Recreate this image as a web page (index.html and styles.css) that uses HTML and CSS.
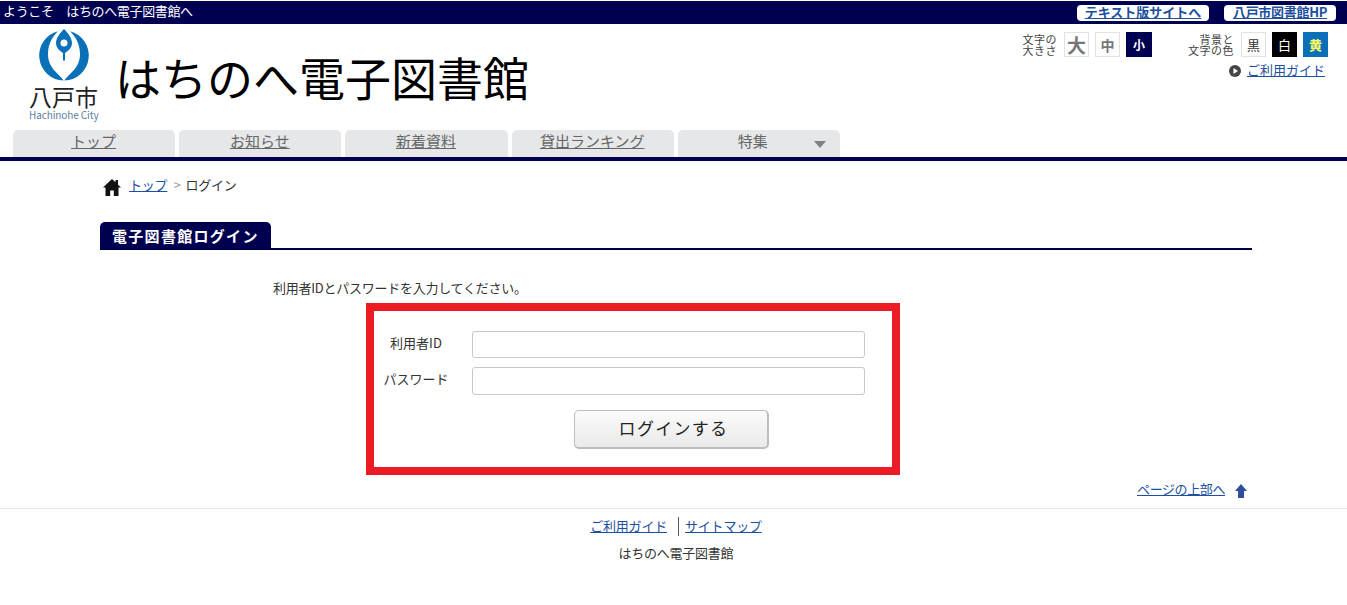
FILE: index.html
```html
<!DOCTYPE html>
<html lang="ja">
<head>
<meta charset="utf-8">
<title>はちのへ電子図書館</title>
<link rel="stylesheet" href="styles.css">
</head>
<body>
<div class="topbar">
  <span class="welcome">ようこそ　はちのへ電子図書館へ</span>
  <div class="toplinks">
    <a class="pill pill-a" href="#">テキスト版サイトへ</a>
    <a class="pill pill-b" href="#">八戸市図書館HP</a>
  </div>
</div>
<header class="header">
  <div class="logo">
    <svg class="mark" width="54" height="54" viewBox="0 0 54 54" aria-hidden="true">
      <path fill="#0a71b9" d="M20 3.300A25 25 0 0 0 25.500 52.500C22 46 10 41 10 26 10 16 15 8 20 3.300z"/>
      <path fill="#0a71b9" d="M32 3.300A25 25 0 0 1 26.500 52.500C30 46 42 41 42 26 42 16 37 8 32 3.300z"/>
      <path fill="#0a71b9" fill-rule="evenodd" d="M26 1c4 4 8 9 8 14 0 5-4 8-7 10v7.500h-2V25c-3-2-7-5-7-10 0-5 4-10 8-14zm0 10.500a3.500 3.500 0 1 0 0 7 3.500 3.500 0 0 0 0-7z"/>
    </svg>
    <span class="city">八戸市</span>
    <span class="city-en">Hachinohe City</span>
  </div>
  <div class="site-title">はちのへ電子図書館</div>
  <div class="tools">
    <div class="tool-row">
      <div class="tool-group">
        <span class="tool-label">文字の<br>大きさ</span>
        <span class="sq sq-lg">大</span>
        <span class="sq sq-md">中</span>
        <span class="sq sq-sm sq-navy">小</span>
      </div>
      <div class="tool-group">
        <span class="tool-label tool-label-r">背景と<br>文字の色</span>
        <span class="sq sq-plain">黒</span>
        <span class="sq sq-plain sq-black">白</span>
        <span class="sq sq-plain sq-blue">黄</span>
      </div>
    </div>
    <div class="guide">
      <svg width="12" height="12" viewBox="0 0 12 12" aria-hidden="true"><circle cx="6" cy="6" r="6" fill="#444"/><path d="M4.500 3v6L9 6z" fill="#fff"/></svg>
      <a href="#">ご利用ガイド</a>
    </div>
  </div>
</header>
<nav class="nav">
  <a class="tab" href="#">トップ</a>
  <a class="tab" href="#">お知らせ</a>
  <a class="tab" href="#">新着資料</a>
  <a class="tab" href="#">貸出ランキング</a>
  <span class="tab tab-drop">特集<i class="caret"></i></span>
</nav>
<main class="main">
  <div class="crumb">
    <svg width="18" height="17" viewBox="0 0 18 17" aria-hidden="true"><path fill="#111" d="M9 0 0 8.500h2.500V17h4.700v-5.500h3.600V17h4.700V8.500H18L15 5.700V1h-2.500v2.300z"/></svg>
    <a href="#">トップ</a><span class="sep">&gt;</span><span>ログイン</span>
  </div>
  <h1 class="heading"><span>電子図書館ログイン</span></h1>
  <p class="lead">利用者IDとパスワードを入力してください。</p>
  <form class="login" onsubmit="return false">
    <div class="field">
      <label class="field-label" for="uid">利用者ID</label>
      <input class="input" id="uid" type="text">
    </div>
    <div class="field field-2">
      <label class="field-label field-label-up" for="pw">パスワード</label>
      <input class="input input-tall" id="pw" type="password">
    </div>
    <button class="submit" type="submit">ログインする</button>
  </form>
  <div class="pagetop">
    <a href="#">ページの上部へ</a>
    <svg width="12" height="14" viewBox="0 0 12 14" aria-hidden="true"><path fill="#2f4e9c" d="M6 0 12 7H9v7H3V7H0z"/></svg>
  </div>
</main>
<footer class="footer">
  <div class="foot-links">
    <a href="#">ご利用ガイド</a><a class="foot-sep" href="#">サイトマップ</a>
  </div>
  <div class="foot-name">はちのへ電子図書館</div>
</footer>
</body>
</html>
```
FILE: styles.css
```css
* { box-sizing: border-box; }
html, body { margin: 0; padding: 0; }
body {
  background: #fff;
  color: #333;
  font-family: "Noto Sans CJK JP", "Noto Sans", sans-serif;
  font-size: 13px;
  overflow: hidden;
  height: 605px;
}
a { color: #1c4f9f; }

.topbar {
  margin-top: 1px;
  height: 23px;
  background: #000050;
  color: #fff;
  display: flex;
  justify-content: space-between;
  align-items: flex-start;
  padding-left: 3px;
  line-height: 20px;
}
.welcome { letter-spacing: -0.35px; }
.toplinks { display: flex; gap: 15px; padding-right: 11px; padding-top: 4px; }
.pill {
  height: 16px;
  background: #fff;
  border-radius: 4px;
  font-weight: 700;
  font-size: 13px;
  line-height: 13px;
  text-align: center;
  display: block;
  white-space: nowrap;
}
.pill-a { width: 132px; }
.pill-b { width: 112px; letter-spacing: -0.3px; }

.header {
  height: 106px;
  display: flex;
  align-items: flex-start;
}
.logo {
  width: 117px;
  padding-left: 29px;
  padding-top: 4px;
  display: flex;
  flex-direction: column;
  align-items: flex-start;
}
.mark { margin-left: 9px; }
.city {
  font-size: 23px;
  line-height: 23px;
  margin-top: 3px;
  color: #222;
}
.city-en {
  font-size: 10px;
  line-height: 12px;
  margin-top: 1px;
  color: #5b7f9f;
  white-space: nowrap;
  letter-spacing: -0.1px;
}
.site-title {
  font-size: 46px;
  line-height: 66px;
  margin-top: 19px;
  margin-left: -2px;
  color: #000;
  white-space: nowrap;
}
.tools {
  margin-left: auto;
  padding-right: 19px;
  padding-top: 8px;
  display: flex;
  flex-direction: column;
  align-items: flex-end;
}
.tool-row { display: flex; gap: 36px; }
.tool-group { display: flex; gap: 6px; align-items: center; }
.tool-label {
  font-size: 11px;
  letter-spacing: 0.5px;
  line-height: 11px;
  color: #444;
  text-align: left;
  margin-right: 1px;
}
.tool-label-r { text-align: right; }
.sq {
  width: 25px;
  height: 25px;
  border: 1px solid #e2e2e2;
  display: flex;
  align-items: center;
  justify-content: center;
  font-weight: 700;
  color: #777;
  line-height: 1;
}
.sq-lg { font-size: 19px; }
.sq-md { font-size: 14px; }
.sq-sm { font-size: 12px; }
.sq-navy { background: #000050; border-color: #000050; color: #fff; width: 26px; }
.sq-plain { font-size: 13px; font-weight: 400; color: #333; }
.sq-black { background: #000; border-color: #000; color: #fff; }
.sq-blue { background: #0a71b9; border-color: #0a71b9; color: #ffff66; font-weight: 700; }
.guide {
  margin-top: 3px;
  margin-right: 3px;
  display: flex;
  align-items: center;
  gap: 6px;
  line-height: 19px;
}
.guide svg { margin-top: 3px; }

.nav {
  height: 31px;
  padding-left: 13px;
  display: flex;
  gap: 4px;
  border-bottom: 4px solid #000050;
  background: #fff;
}
.tab {
  width: 162.200px;
  height: 27px;
  background: #e6e7e8;
  border-radius: 5px 5px 0 0;
  color: #666;
  font-size: 15px;
  line-height: 22px;
  text-align: center;
  display: block;
  position: relative;
  padding-right: 1px;
}
.tab-drop { padding-right: 12px; }
.caret {
  position: absolute;
  right: 14px;
  top: 11px;
  border-left: 6px solid transparent;
  border-right: 6px solid transparent;
  border-top: 7px solid #808080;
}

.main { padding: 0 95px 0 100px; }
.crumb {
  height: 61px;
  padding: 15px 0 0 3px;
  display: flex;
  align-items: flex-start;
  gap: 8px;
  line-height: 18px;
  letter-spacing: -0.2px;
}
.crumb svg { margin-top: 3px; }
.sep { color: #999; margin: 0 -3px 0 -2px; }
.heading {
  margin: 0;
  height: 28px;
  border-bottom: 2px solid #000050;
  display: flex;
}
.heading span {
  display: block;
  height: 26px;
  width: 171px;
  background: #000050;
  color: #fff;
  font-size: 15px;
  font-weight: 700;
  line-height: 28px;
  padding-left: 12px;
  border-radius: 5px 5px 0 0;
  white-space: nowrap;
  letter-spacing: 1.3px;
}
.lead {
  margin: 0;
  padding: 28px 0 0 173px;
  height: 53px;
  line-height: 19px;
  letter-spacing: -0.25px;
}
.login {
  margin-left: 266px;
  width: 534px;
  height: 172px;
  border: 8px solid #ed1c24;
  padding-top: 20px;
  display: flex;
  flex-direction: column;
}
.field { display: flex; align-items: center; height: 27px; }
.field-2 { margin-top: 9px; height: 28px; }
.field-label {
  width: 98px;
  text-align: center;
  padding-right: 14px;
  margin-top: -4px;
  line-height: 20px;
  white-space: nowrap;
}
.field-label-up { letter-spacing: 0; }
.input {
  width: 393px;
  height: 27px;
  border: 1px solid #c8c8c8;
  border-radius: 3px;
  background: #fff;
  padding: 0;
  margin: 0;
}
.input-tall { height: 28px; }
.submit {
  align-self: flex-start;
  margin: 15px 0 0 200px;
  width: 195px;
  height: 39px;
  border: 1px solid #bdbdbd;
  border-width: 1px 2px 2px 1px;
  border-radius: 5px;
  background: linear-gradient(#fbfbfb, #e9e9e9);
  color: #222;
  font-family: inherit;
  font-size: 17px;
  letter-spacing: 1.3px;
  line-height: 33px;
  padding: 0 0 3px 5px;
}
.pagetop {
  margin-top: 4px;
  height: 29px;
  display: flex;
  align-items: flex-start;
  justify-content: flex-end;
  gap: 10px;
  padding-right: 5px;
  line-height: 19px;
  letter-spacing: -0.4px;
}
.pagetop svg { margin-top: 5px; }

.footer {
  border-top: 1px solid #e8e8e8;
  text-align: center;
  padding-top: 7px;
}
.foot-links {
  display: flex;
  justify-content: center;
  line-height: 19px;
  height: 20px;
  padding-left: 5px;
  letter-spacing: -0.2px;
}
.foot-sep {
  margin-left: 11px;
  padding-left: 7px;
  position: relative;
}
.foot-sep::before {
  content: "";
  position: absolute;
  left: 0;
  top: 1px;
  height: 19px;
  border-left: 1px solid #555;
}
.foot-name {
  margin-top: 8px;
  padding-left: 5px;
  line-height: 18px;
  letter-spacing: -0.25px;
}
```
